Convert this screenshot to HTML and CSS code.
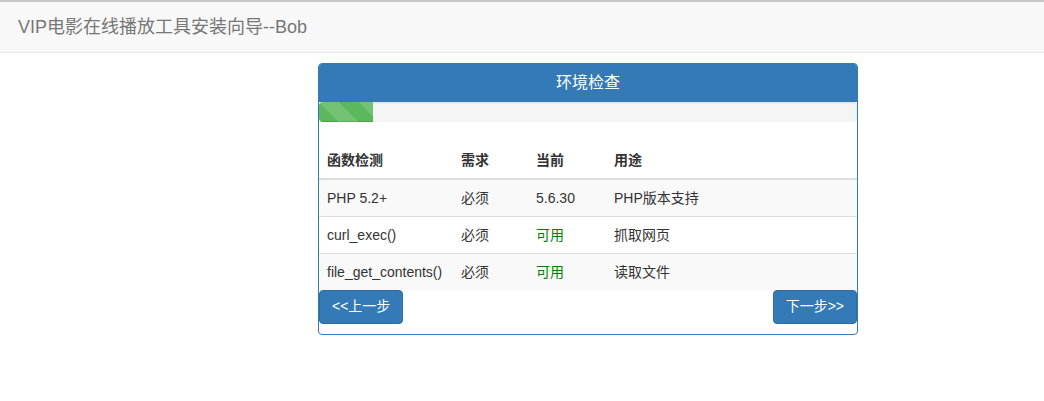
FILE: index.html
```html
<!DOCTYPE html>
<html lang="zh-CN">
<head>
<meta charset="utf-8">
<title>VIP电影在线播放工具安装向导</title>
<link rel="stylesheet" href="styles.css">
</head>
<body>
<nav class="navbar">
  <span class="brand">VIP电影在线播放工具安装向导--Bob</span>
</nav>
<div class="panel">
  <div class="panel-heading">
    <h3 class="panel-title">环境检查</h3>
  </div>
  <div class="progress">
    <div class="progress-bar" style="width: 10%"></div>
  </div>
  <table class="table">
    <thead>
      <tr>
        <th class="c1">函数检测</th>
        <th class="c2">需求</th>
        <th class="c3">当前</th>
        <th>用途</th>
      </tr>
    </thead>
    <tbody>
      <tr>
        <td>PHP 5.2+</td>
        <td>必须</td>
        <td>5.6.30</td>
        <td>PHP版本支持</td>
      </tr>
      <tr>
        <td>curl_exec()</td>
        <td>必须</td>
        <td class="ok">可用</td>
        <td>抓取网页</td>
      </tr>
      <tr>
        <td>file_get_contents()</td>
        <td>必须</td>
        <td class="ok">可用</td>
        <td>读取文件</td>
      </tr>
    </tbody>
  </table>
  <div class="actions">
    <button class="btn">&lt;&lt;上一步</button>
    <button class="btn">下一步&gt;&gt;</button>
  </div>
</div>
</body>
</html>
```
FILE: styles.css
```css
* { box-sizing: border-box; }
html, body { margin: 0; padding: 0; }
body {
  font-family: "Liberation Sans", Arial, "Noto Sans CJK SC", sans-serif;
  font-size: 14px;
  line-height: 1.42857;
  color: #333;
  background: #fff;
}
.navbar {
  height: 53px;
  background: #f8f8f8;
  border-top: 2px solid #c6c6c6;
  border-bottom: 1px solid #e7e7e7;
  display: flex;
  align-items: center;
  padding-left: 18px;
}
.brand {
  font-size: 18px;
  line-height: 20px;
  color: #777;
}
.panel {
  width: 540px;
  margin: 10px 0 0 318px;
  border: 1px solid #337ab7;
  border-radius: 4px;
  background: #fff;
  padding-bottom: 10px;
}
.panel-heading {
  background: #337ab7;
  color: #fff;
  padding: 10px 15px;
  border-radius: 3px 3px 0 0;
  text-align: center;
}
.panel-title {
  margin: 0;
  font-size: 16px;
  line-height: 1.1;
  font-weight: normal;
}
.progress {
  height: 20px;
  margin-bottom: 20px;
  background: #f5f5f5;
  border-radius: 4px;
  overflow: hidden;
  box-shadow: inset 0 1px 2px rgba(0,0,0,.1);
}
.progress-bar {
  height: 100%;
  background-color: #5cb85c;
  background-image: linear-gradient(45deg, rgba(255,255,255,.15) 25%, transparent 25%, transparent 50%, rgba(255,255,255,.15) 50%, rgba(255,255,255,.15) 75%, transparent 75%, transparent);
  background-size: 40px 40px;
  box-shadow: inset 0 -1px 0 rgba(0,0,0,.15);
}
.table {
  width: 100%;
  border-collapse: collapse;
  border-spacing: 0;
  table-layout: fixed;
}
.table th, .table td {
  padding: 8px;
  line-height: 20px;
  text-align: left;
  vertical-align: top;
  white-space: nowrap;
  overflow: visible;
}
.table th {
  font-weight: bold;
  border-bottom: 2px solid #ddd;
  vertical-align: bottom;
}
.table td { border-top: 1px solid #ddd; }
.table tbody tr:nth-child(odd) { background: #f9f9f9; }
.c1 { width: 134px; }
.c2 { width: 75px; }
.c3 { width: 78px; }
.ok { color: green; }
.actions {
  display: flex;
  justify-content: space-between;
}
.btn {
  font-family: inherit;
  font-size: 14px;
  line-height: 1.42857;
  padding: 6px 12px;
  color: #fff;
  background: #337ab7;
  border: 1px solid #2e6da4;
  border-radius: 4px;
  cursor: pointer;
}
```
